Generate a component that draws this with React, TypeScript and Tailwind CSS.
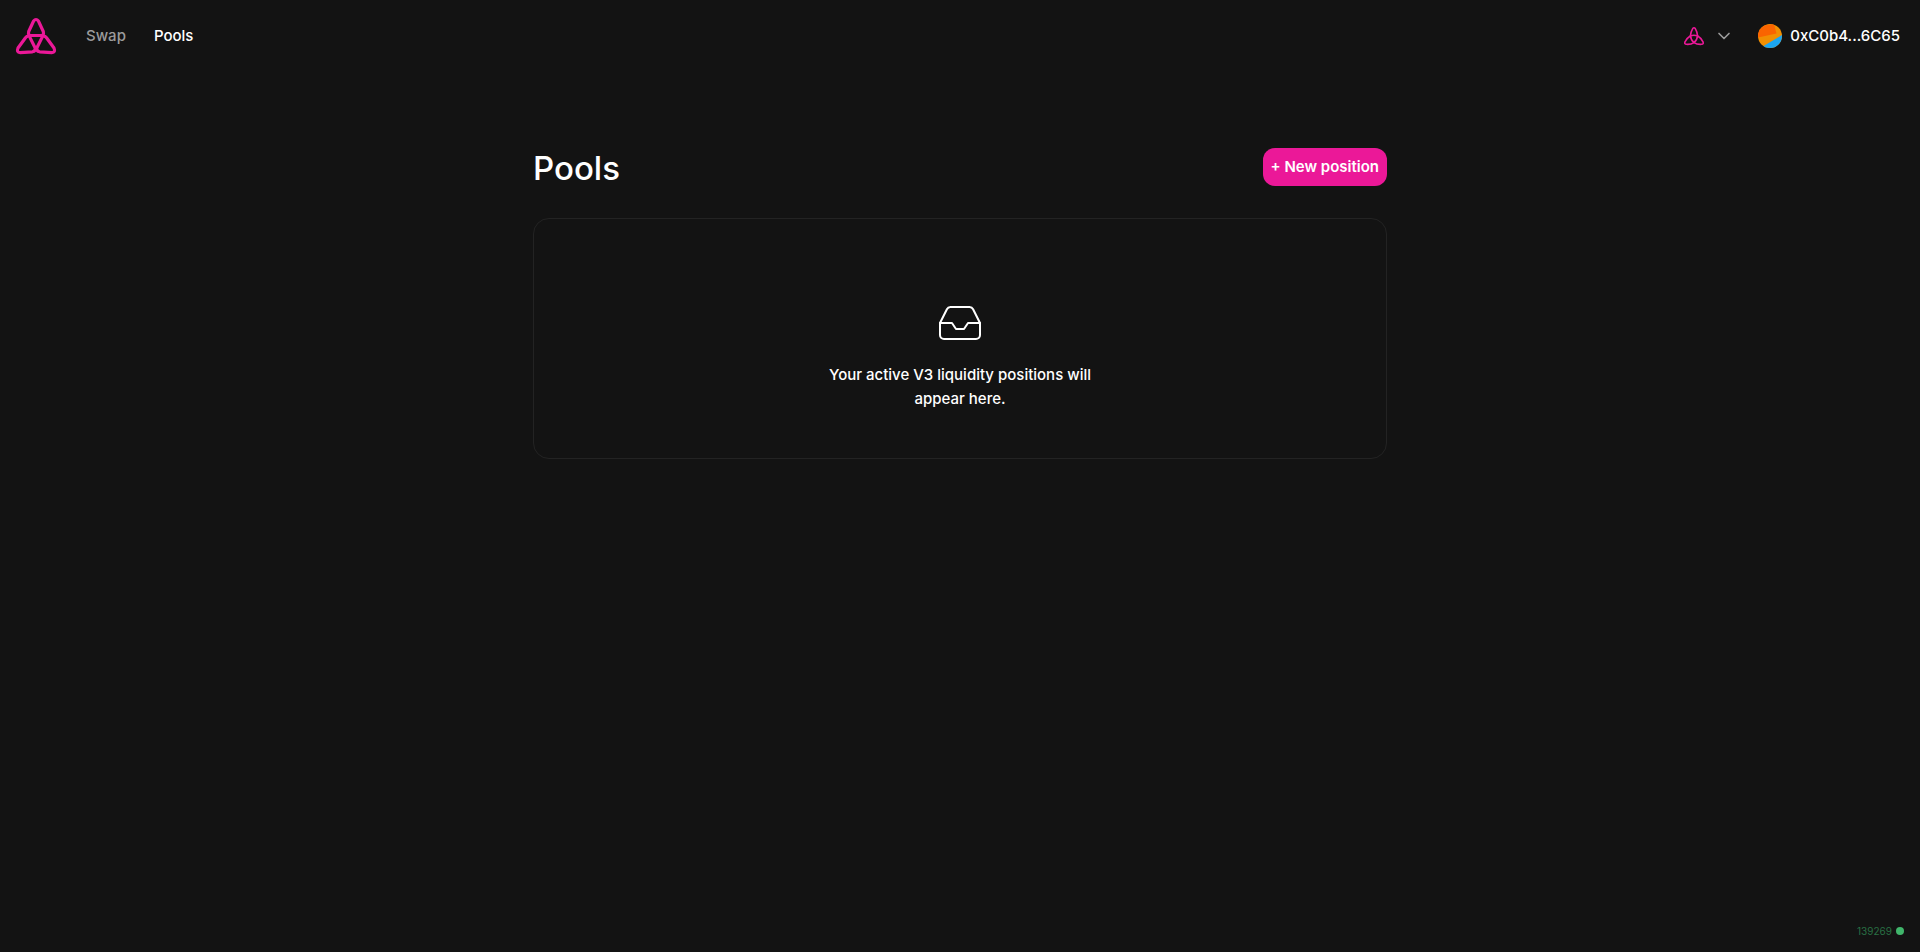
import { ChevronDown, Inbox } from 'lucide-react'

function Logo() {
  return (
    <svg
      className="size-12"
      viewBox="0 0 48 48"
      fill="none"
      stroke="currentColor"
      strokeWidth="3.2"
      strokeLinejoin="round"
      aria-hidden="true"
    >
      <path d="M21.6 9Q24 6 26.4 9L31.300 19.500Q32.200 23.500 29 23.500H19Q15.800 23.500 16.700 19.500Z" />
      <path d="M17.400 24.400Q15.200 23.600 13.500 25.700L6 36Q4.200 40.500 8.200 40.700L20.400 39.800Q23.800 39 23.200 36Z" />
      <path d="M30.600 24.400Q32.800 23.600 34.500 25.700L42 36Q43.800 40.500 39.800 40.700L27.600 39.800Q24.200 39 24.800 36Z" />
    </svg>
  )
}

function ChainIcon() {
  return (
    <svg
      className="size-5"
      viewBox="0 0 20 20"
      fill="none"
      stroke="currentColor"
      strokeWidth="1.6"
      strokeLinejoin="round"
      aria-hidden="true"
    >
      <path d="M8.700 2.600Q10 1 11.300 2.600Q13.300 6 13.500 9.500Q13.300 14 10 16.600Q6.700 14 6.500 9.500Q6.700 6 8.700 2.600Z" />
      <path d="M6.500 9.700Q9.800 8.800 13.500 9.700Q16.800 11.700 19 15.800Q19.800 18.200 17.600 18.300Q13 18.600 10 16.600Q7 18.600 2.400 18.300Q0.200 18.200 1 15.800Q3.200 11.700 6.500 9.700Z" />
    </svg>
  )
}

function Avatar() {
  return (
    <svg className="size-6" viewBox="0 0 24 24" aria-hidden="true">
      <clipPath id="avatar-clip">
        <circle cx="12" cy="12" r="12" />
      </clipPath>
      <g clipPath="url(#avatar-clip)">
        <rect width="24" height="24" fill="#f18f02" />
        <path d="M0 13.500L18.500 9.500L16 0L6 1.500L0 7Z" fill="#fa6400" />
        <path d="M3 23.500L25 10.500V25H3Z" fill="#1ba6f2" />
      </g>
    </svg>
  )
}

export default function App() {
  return (
    <div className="flex min-h-screen flex-col bg-[#131313] font-['Inter',sans-serif] text-[15px] leading-6 font-medium text-white">
      <header className="flex h-18 items-center justify-between pr-5 pl-3">
        <nav className="flex items-center">
          <a href="#home" aria-label="Home" className="text-[#eb1898]">
            <Logo />
          </a>
          <a href="#swap" className="ml-[26px] text-[#9b9b9b]">
            Swap
          </a>
          <a href="#pools" aria-current="page" className="ml-7">
            Pools
          </a>
        </nav>
        <div className="flex items-center gap-6">
          <button type="button" aria-label="Select network" className="flex items-center gap-2.5 text-[#eb1898]">
            <ChainIcon />
            <ChevronDown className="size-5 text-[#9b9b9b]" strokeWidth={2} />
          </button>
          <button type="button" className="flex items-center gap-2">
            <Avatar />
            <span>0xC0b4...6C65</span>
          </button>
        </div>
      </header>

      <main className="mx-auto w-full max-w-[870px] grow px-2 pt-[76px]">
        <div className="flex items-center justify-between">
          <h1 className="pt-0.5 text-[33px] leading-9">Pools</h1>
          <button
            type="button"
            className="h-[38px] rounded-xl bg-[#eb1898] px-2 font-semibold whitespace-nowrap"
          >
            + New position
          </button>
        </div>
        <section className="mt-8 flex min-h-[241px] flex-col items-center justify-center rounded-2xl border border-[#232323] pt-8">
          <Inbox className="size-12" strokeWidth={1} />
          <p className="mt-4 w-[300px] text-center">
            Your active V3 liquidity positions will appear here.
          </p>
        </section>
      </main>

      <footer className="flex items-center justify-end gap-1 px-4 pb-[13px] text-[10px] leading-4 font-normal text-[#297044]">
        <span>139269</span>
        <span className="size-2 rounded-full bg-[#40b66b]" />
      </footer>
    </div>
  )
}
